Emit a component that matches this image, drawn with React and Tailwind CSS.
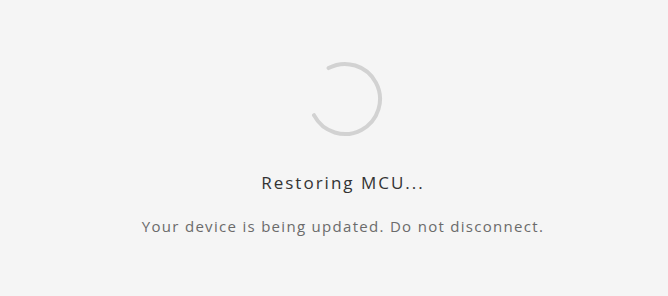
const Spinner = () => {
  const r = 35;
  const c = 2 * Math.PI * r;
  return (
    <svg width="76" height="76" viewBox="0 0 76 76" className="block">
      <circle
        cx="38"
        cy="38"
        r={r}
        fill="none"
        stroke="#d2d2d2"
        strokeWidth="4"
        strokeLinecap="round"
        strokeDasharray={`${c * 0.75} ${c}`}
        transform="rotate(-118 38 38)"
      />
    </svg>
  );
};

export default function App() {
  return (
    <div className="w-[668px] h-[296px] bg-[#f5f5f5] pl-[18px] flex flex-col items-center font-['Open_Sans',sans-serif]">
      <div className="mt-[61px] ml-[4px]">
        <Spinner />
      </div>
      <h1 className="mt-[34px] text-[17px] leading-6 tracking-[2px] text-[#333333]">Restoring MCU...</h1>
      <p className="mt-[21px] text-[15px] leading-5 tracking-[1.3px] text-[#6b6b6b]">
        Your device is being updated. Do not disconnect.
      </p>
    </div>
  );
}
